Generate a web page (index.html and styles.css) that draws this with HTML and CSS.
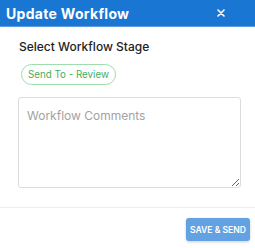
FILE: index.html
```html
<!DOCTYPE html>
<html>
<head>
<meta charset="utf-8">
<link rel="stylesheet" href="styles.css">
</head>
<body>
<div class="modal">
  <div class="header">
    <span class="title">Update Workflow</span>
    <svg class="close" width="8" height="8" viewBox="0 0 8 8"><path d="M1 1L7 7M7 1L1 7" stroke="#fff" stroke-width="1.6" stroke-linecap="round"/></svg>
  </div>
  <div class="body">
    <div class="label">Select Workflow Stage</div>
    <div class="pill">Send To - Review</div>
    <textarea class="comments" placeholder="Workflow Comments"></textarea>
  </div>
  <div class="footer">
    <button class="save">SAVE &amp; SEND</button>
  </div>
</div>
</body>
</html>
```
FILE: styles.css
```css
* { box-sizing: border-box; }
html, body { margin: 0; padding: 0; background: #fff; }
body { font-family: Inter, "Open Sans", sans-serif; width: 255px; height: 248px; overflow: hidden; }
.modal { display: flex; flex-direction: column; width: 255px; }
.header {
  height: 27px;
  background: #1976d2;
  border-bottom: 1px solid #5d9de0;
  display: flex;
  align-items: center;
  justify-content: space-between;
  padding: 0 30px 0 6px;
}
.title { color: #fff; font-weight: 700; font-size: 14px; letter-spacing: 0.3px; }
.close { display: block; margin-top: -1px; }
.body { padding: 12px 14px 0 18px; display: flex; flex-direction: column; align-items: flex-start; }
.label { font-size: 12px; font-weight: 500; color: #222; margin-left: 1px; }
.pill {
  margin-top: 10px;
  margin-left: 3px;
  height: 21px;
  width: 95px;
  justify-content: center;
  border: 1px solid #9fdcae;
  border-radius: 11px;
  color: #47ad5e;
  font-size: 9.8px;
  display: flex;
  align-items: center;
}
.comments {
  margin-top: 12px;
  width: 223px;
  height: 91px;
  border: 1px solid #dcdcdc;
  border-radius: 3px;
  padding: 10px 8px;
  font-family: inherit;
  font-size: 12px;
  resize: vertical;
  outline: none;
}
.comments::placeholder { color: #a3a3a3; }
.footer {
  margin-top: 19px;
  border-top: 1px solid #eeeeee;
  display: flex;
  justify-content: flex-end;
  padding: 10px 5px 0 0;
}
.save {
  height: 23px;
  width: 64px;
  padding: 0;
  border: none;
  border-radius: 3px;
  background: #62a2e2;
  color: #fff;
  font-family: inherit;
  font-size: 8.6px;
  font-weight: 600;
  box-shadow: 0 1px 3px rgba(0,0,0,0.2);
}
```
